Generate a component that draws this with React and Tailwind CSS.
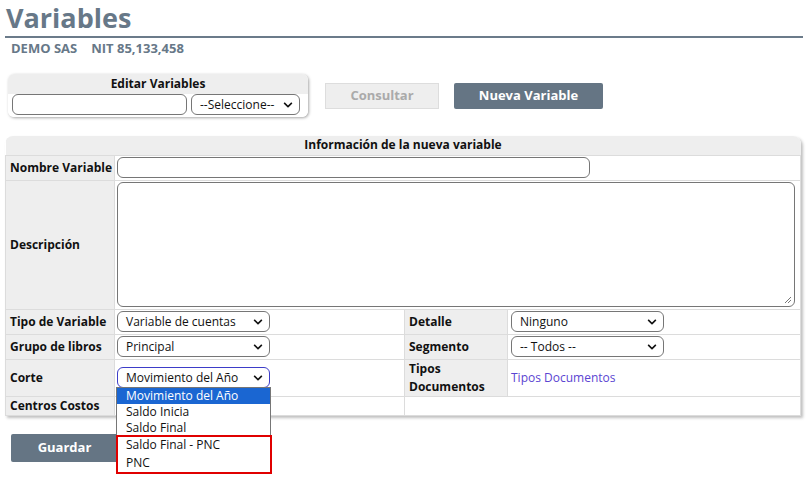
import { FaChevronDown } from 'react-icons/fa';

const Select = ({ value, w = 'w-[153px]', focused = false }) => (
  <div
    className={`relative flex h-[21px] ${w} items-center rounded-[6px] border bg-white pl-[8px] text-[12px] text-[#111] ${
      focused ? 'border-[#3d3dc8]' : 'border-[#767676]'
    }`}
  >
    <span className="whitespace-nowrap leading-none">{value}</span>
    <FaChevronDown className="absolute right-[6px] top-[5px] text-[#111]" size={10} />
  </div>
);

const Label = ({ children, className = '' }) => (
  <td className={`border border-[#dcdcdc] bg-[#eeeeee] px-[4px] py-0 text-[12px] font-bold text-[#111] ${className}`}>
    {children}
  </td>
);

const Cell = ({ children, className = '', ...rest }) => (
  <td className={`border border-[#dcdcdc] bg-white px-[2px] py-0 ${className}`} {...rest}>
    {children}
  </td>
);

export default function App() {
  return (
    <div className="relative h-[480px] w-[808px] overflow-hidden bg-white font-['Open_Sans',sans-serif] text-[13px]">
      {/* Encabezado */}
      <div className="px-[5px]">
        <h1 className="pl-[1px] text-[27px] font-bold leading-[36px] text-[#677888]">Variables</h1>
        <div className="h-[2px] bg-[#6b7b8a]"></div>
        <p className="pl-[6px] text-[13px] font-bold leading-[20px] text-[#677888]">
          DEMO SAS<span className="ml-[14px]">NIT 85,133,458</span>
        </p>
      </div>

      {/* Barra de edición */}
      <div className="mt-[16px] flex items-start pl-[8px]">
        <div className="w-[300px] overflow-hidden rounded-[6px] shadow-[1px_1px_3px_rgba(0,0,0,0.35)]">
          <div className="bg-[#eeeeee] text-center text-[12px] font-bold leading-[20px] text-[#111]">Editar Variables</div>
          <div className="flex gap-[4px] bg-white px-[4px] pb-[2px]">
            <div className="h-[21px] w-[175px] rounded-[6px] border border-[#767676] bg-white"></div>
            <Select value="--Seleccione--" w="w-[109px]" />
          </div>
        </div>
        <button className="ml-[17px] mt-[9px] h-[26px] w-[114px] border border-[#dddddd] bg-[#eeeeee] text-[13px] font-bold text-[#aaaaaa]">
          Consultar
        </button>
        <button className="ml-[15px] mt-[9px] h-[26px] w-[149px] rounded-[2px] bg-[#657584] text-[13px] font-bold text-white">
          Nueva Variable
        </button>
      </div>

      {/* Formulario */}
      <div className="ml-[5px] mt-[19px] w-[796px] overflow-hidden rounded-t-[8px] shadow-[2px_2px_3px_rgba(0,0,0,0.25)]">
        <table className="w-full table-fixed border-collapse">
          <colgroup>
            <col className="w-[109px]" />
            <col className="w-[290px]" />
            <col className="w-[103px]" />
            <col />
          </colgroup>
          <tbody>
            <tr className="h-[19px]">
              <td colSpan={4} className="border-b border-[#dcdcdc] bg-[#eeeeee] p-0 text-center text-[12px] font-bold leading-[18px] text-[#111]">
                Información de la nueva variable
              </td>
            </tr>
            <tr className="h-[25px]">
              <Label className="whitespace-nowrap">Nombre Variable</Label>
              <Cell colSpan={3}>
                <div className="h-[21px] w-[473px] rounded-[6px] border border-[#767676] bg-white"></div>
              </Cell>
            </tr>
            <tr className="h-[129px]">
              <Label>Descripción</Label>
              <Cell colSpan={3}>
                <div className="relative h-[125px] w-[678px] rounded-[6px] border border-[#767676] bg-white">
                  <svg className="absolute bottom-[2px] right-[2px]" width="8" height="8" viewBox="0 0 8 8">
                    <path d="M7 1 L1 7 M7 4 L4 7" stroke="#777" strokeWidth="1" />
                  </svg>
                </div>
              </Cell>
            </tr>
            <tr className="h-[25px]">
              <Label className="whitespace-nowrap">Tipo de Variable</Label>
              <Cell><Select value="Variable de cuentas" /></Cell>
              <Label>Detalle</Label>
              <Cell className="pl-[3px]"><Select value="Ninguno" /></Cell>
            </tr>
            <tr className="h-[25px]">
              <Label className="whitespace-nowrap">Grupo de libros</Label>
              <Cell><Select value="Principal" /></Cell>
              <Label>Segmento</Label>
              <Cell className="pl-[3px]"><Select value="-- Todos --" /></Cell>
            </tr>
            <tr className="h-[37px]">
              <Label>Corte</Label>
              <Cell><Select value="Movimiento del Año" focused /></Cell>
              <Label className="leading-[18px]">Tipos Documentos</Label>
              <Cell className="pl-[3px] text-[12px] text-[#5b45d2]">Tipos Documentos</Cell>
            </tr>
            <tr className="h-[19px]">
              <Label className="whitespace-nowrap leading-[17px]">Centros Costos</Label>
              <Cell></Cell>
              <Cell colSpan={2}></Cell>
            </tr>
          </tbody>
        </table>
      </div>

      <button className="ml-[11px] mt-[18px] h-[28px] w-[107px] rounded-[2px] bg-[#657584] text-[13px] font-bold text-white">
        Guardar
      </button>

      {/* Lista desplegada */}
      <div className="absolute left-[116px] top-[387px] w-[155px] border border-[#767676] bg-white text-[12px] text-[#111]">
        <div className="bg-[#1a66d2] pl-[9px] leading-[16px] text-white">Movimiento del Año</div>
        <div className="pl-[9px] leading-[16px]">Saldo Inicia</div>
        <div className="pl-[9px] leading-[16px]">Saldo Final</div>
        <div className="pl-[9px] leading-[18px]">Saldo Final - PNC</div>
        <div className="pl-[9px] leading-[18px]">PNC</div>
      </div>
      <div className="pointer-events-none absolute left-[116px] top-[435px] h-[39px] w-[156px] border-2 border-[#e00000]"></div>
    </div>
  );
}
